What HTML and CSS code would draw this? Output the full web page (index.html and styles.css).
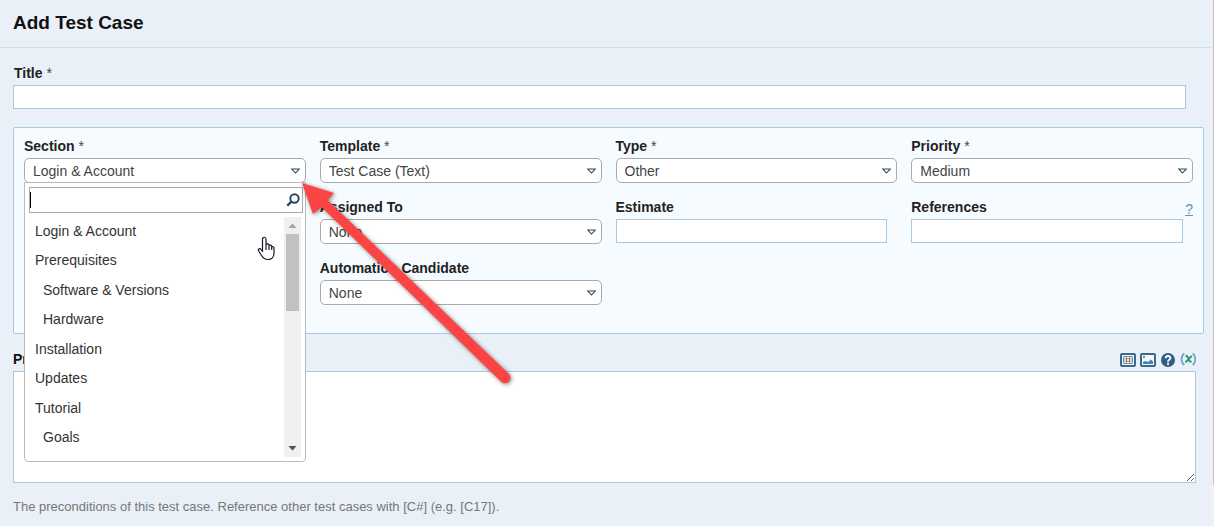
FILE: index.html
```html
<!DOCTYPE html>
<html lang="en">
<head>
<meta charset="utf-8">
<title>Add Test Case</title>
<link rel="stylesheet" href="styles.css">
</head>
<body>
<svg class="defs" aria-hidden="true">
  <symbol id="caret" viewBox="0 0 9 6"><path d="M.8 1h7.400L4.500 5z" fill="#fff" stroke="#264a63" stroke-width="1.100"/></symbol>
</svg>
<div class="page">
  <main class="content">
    <header class="header"><h1>Add Test Case</h1></header>
    <form class="form">
      <div class="field title-field">
        <label for="title">Title <span class="req">*</span></label>
        <input class="text" id="title" type="text">
      </div>

      <div class="panel">
        <div class="field">
          <label for="section">Section <span class="req">*</span></label>
          <div class="select">
            <select id="section"><option>Login &amp; Account</option></select>
            <svg class="caret"><use href="#caret"/></svg>
            <div class="dropdown">
              <div class="search">
                <input type="text" aria-label="Search sections">
                <span class="text-cursor"></span>
                <svg class="lens" viewBox="0 0 14 14"><circle cx="8.500" cy="5.500" r="4.200" fill="none" stroke="#264a63" stroke-width="2"/><path d="M5.500 8.500L1.300 12.700" stroke="#264a63" stroke-width="2.400"/></svg>
              </div>
              <div class="results">
                <ul>
                  <li>Login &amp; Account</li>
                  <li>Prerequisites</li>
                  <li class="child">Software &amp; Versions</li>
                  <li class="child">Hardware</li>
                  <li>Installation</li>
                  <li>Updates</li>
                  <li>Tutorial</li>
                  <li class="child">Goals</li>
                </ul>
                <div class="scrollbar">
                  <svg class="step" viewBox="0 0 17 17"><path d="M4.500 11L8.500 6.500L12.500 11z" fill="#a3a3a3"/></svg>
                  <div class="thumb"></div>
                  <svg class="step last" viewBox="0 0 17 17"><path d="M4.500 6L8.500 10.500L12.500 6z" fill="#505050"/></svg>
                </div>
              </div>
            </div>
          </div>
        </div>
        <div class="field">
          <label for="template">Template <span class="req">*</span></label>
          <div class="select"><select id="template"><option>Test Case (Text)</option></select><svg class="caret"><use href="#caret"/></svg></div>
        </div>
        <div class="field">
          <label for="type">Type <span class="req">*</span></label>
          <div class="select"><select id="type"><option>Other</option></select><svg class="caret"><use href="#caret"/></svg></div>
        </div>
        <div class="field">
          <label for="priority">Priority <span class="req">*</span></label>
          <div class="select"><select id="priority"><option>Medium</option></select><svg class="caret"><use href="#caret"/></svg></div>
        </div>

        <div class="field second">
          <label for="assigned">Assigned To</label>
          <div class="select"><select id="assigned"><option>None</option></select><svg class="caret"><use href="#caret"/></svg></div>
        </div>
        <div class="field">
          <label for="estimate">Estimate</label>
          <input class="text short" id="estimate" type="text">
        </div>
        <div class="field">
          <div class="label-row"><label for="references">References</label><a class="hint" href="#">?</a></div>
          <input class="text short" id="references" type="text">
        </div>

        <div class="field second">
          <label for="automation">Automation Candidate</label>
          <div class="select"><select id="automation"><option>None</option></select><svg class="caret"><use href="#caret"/></svg></div>
        </div>
      </div>

      <div class="editor">
        <div class="editor-head">
          <label for="preconditions">Preconditions</label>
          <div class="tools">
            <button type="button" aria-label="Insert table"><svg viewBox="0 0 16 14"><rect x="1" y="1" width="14" height="12" rx="1" fill="#f4f4f2" stroke="#376a90" stroke-width="2"/><path d="M3.500 3.500h9v7h-9zM3.500 5.800h9M3.500 8.200h9M6.500 3.500v7M9.500 3.500v7" fill="none" stroke="#8a8f94"/></svg></button>
            <button type="button" aria-label="Insert image"><svg viewBox="0 0 16 14"><rect x="1" y="1" width="14" height="12" rx="1" fill="#f4f8fb" stroke="#376a90" stroke-width="2"/><rect x="3" y="3" width="2" height="2" fill="#4fbf3f"/><path d="M3 11V9l2-1 3 1 3-2.500 2 2V11z" fill="#4484b4"/></svg></button>
            <button type="button" aria-label="Formatting help"><svg viewBox="0 0 16 14"><circle cx="8" cy="7" r="7" fill="#2f5f85"/><path d="M5.700 5.300C5.700 2.300 10.400 2.300 10.400 5.100C10.400 6.800 8 6.800 8 8.700" fill="none" stroke="#fff" stroke-width="1.900"/><path d="M7 9.800h2v1.900H7z" fill="#fff"/></svg></button>
            <button type="button" aria-label="Insert variable"><svg viewBox="0 0 16 14"><path d="M4.300 .3C.6 3.300.6 9 4.300 12M12.700 .3c3.500 3 3.500 8.700 0 11.700" fill="none" stroke="#6fa5c8" stroke-width="1.700"/><path d="M5.500 3.300c2-.8 2 0 3 2.500s1.500 3.500 3 2.500M11.800 2.800L5.500 9.300" fill="none" stroke="#169a6d" stroke-width="1.800"/></svg></button>
          </div>
        </div>
        <textarea id="preconditions"></textarea>
        <p class="help">The preconditions of this test case. Reference other test cases with [C#] (e.g. [C17]).</p>
      </div>
    </form>
  </main>
  <div class="page-scroll"><div class="page-thumb"></div></div>
</div>

<svg class="pointer-arrow" viewBox="0 0 230 220" aria-hidden="true"><path d="M11 13L43 23L36.500 30L218 204A5.500 5.500 0 0 1 210.500 212L30.500 37L22 44z" fill="#fd4444"/></svg>
<svg class="hand" viewBox="0 0 18 25" aria-hidden="true"><path d="M5.500 14V3.200C5.500.6 9 .6 9 3.200V10.500V8.800C9.500 7.300 12 7.600 12 9.200V11V9.800C12.700 8.500 14.700 9 14.700 10.500V12V11.200C15.500 10.200 17 10.800 17 12.200V17C17 21 14.500 23.500 11 23.500C7.500 23.500 6 22 4.500 19.500L1.500 14.700C.8 13 3 12 4 13.500L5.500 15.500V12M9 10v4M12 10.500v3.500M14.700 11.500V14" fill="#fff" stroke="#15152b" stroke-width="1.200" stroke-linejoin="round"/></svg>
</body>
</html>
```
FILE: styles.css
```css
* { box-sizing: border-box; }

body {
  margin: 0;
  background: #e9f0f7;
  color: #222;
  font: 14px/20px "Liberation Sans", Arial, sans-serif;
  overflow: hidden;
}

.defs { position: absolute; width: 0; height: 0; }

.page {
  display: grid;
  grid-template-columns: 1fr 3px;
  min-height: 100vh;
}

.header {
  padding: 10px 13px 11px;
  border-bottom: 1px solid #cfe0ec;
}

h1 {
  margin: 0;
  color: #111;
  font-size: 19px;
  line-height: 26px;
}

.form { padding: 15px 7px 0 13px; }

.field { display: flex; flex-direction: column; gap: 2px; min-width: 0; }

.title-field { padding-right: 18px; margin-bottom: 18px; }

label { font-weight: bold; padding-left: 1px; }
.req { color: #444; font-weight: normal; }

input, select, textarea { font: inherit; color: #444; outline: none; margin: 0; }

.text {
  width: 100%;
  height: 24px;
  padding: 0 6px;
  border: 1px solid #aac9df;
  background: #fff;
}
.text.short { width: calc(100% - 10px); }

.panel {
  display: grid;
  grid-template-columns: repeat(4, minmax(0, 1fr));
  gap: 14px;
  padding: 8px 10px 28px;
  border: 1px solid #aac9df;
  border-radius: 2px;
  background: #f6fbff;
}
.panel label { padding-left: 0; }
.second { grid-column-start: 2; }

.select { position: relative; display: grid; align-items: center; }
.select > * { grid-area: 1 / 1; }

select {
  appearance: none;
  width: 100%;
  height: 25px;
  padding: 0 24px 0 8px;
  border: 1px solid #aaa;
  border-radius: 5px;
  background: #fff;
}

.caret {
  justify-self: end;
  width: 9px;
  height: 6px;
  margin-right: 6px;
  pointer-events: none;
}

.dropdown {
  position: absolute;
  z-index: 2;
  top: 24px;
  left: 0;
  right: 0;
  padding: 4px 2px 4px 4px;
  border: 1px solid #bbb;
  border-radius: 0 0 4px 4px;
  background: #fff;
}

.search { display: grid; align-items: center; }
.search > * { grid-area: 1 / 1; }
.search input {
  width: 100%;
  height: 26px;
  padding: 0 22px 0 4px;
  border: 1px solid #aaa;
}
.text-cursor { width: 1px; height: 16px; margin-left: 1px; background: #000; }
.lens { justify-self: end; width: 14px; height: 14px; margin-right: 3px; }

.results {
  display: grid;
  grid-template-columns: 1fr 17px;
  margin: 4px 2px 0 0;
}
.results ul {
  display: grid;
  grid-auto-rows: 1fr;
  align-items: center;
  height: 236px;
  margin: -1px 0 0;
  padding: 0 6px;
  list-style: none;
  color: #333;
}
.results .child { padding-left: 8px; }

.scrollbar { display: flex; flex-direction: column; height: 240px; background: #f0f0f0; }
.step { width: 17px; height: 17px; }
.last { margin-top: auto; }
.thumb { height: 77px; margin: 0 2px; background: #c1c1c1; }

.editor { padding-right: 8px; margin-top: 15px; }
.editor-head { display: flex; justify-content: space-between; align-items: center; margin-bottom: 2px; }
.editor-head label { padding-left: 0; color: #111; }
.tools { display: flex; gap: 4px; padding-top: 2px; }
button { display: block; padding: 0; border: 0; background: none; }
button svg { display: block; width: 16px; height: 14px; }

textarea {
  display: block;
  width: 100%;
  height: 112px;
  border: 1px solid #aac9df;
  background: #fff;
}

.help { margin: 14px 0 0; color: #777; font-size: 13px; line-height: 20px; }

.label-row { display: flex; justify-content: space-between; height: 20px; }
.hint { color: #5794c0; line-height: 24px; }

.page-scroll { padding-left: 2px; background: #eff2f5; }
.page-thumb { height: 485px; background: #c1c1c1; }

.pointer-arrow {
  position: absolute;
  z-index: 3;
  left: 291px;
  top: 170px;
  width: 230px;
  height: 220px;
  filter: drop-shadow(1px 1px 2px rgba(0, 0, 0, .5));
}

.hand { position: absolute; z-index: 3; left: 257px; top: 236px; width: 18px; height: 25px; }
```
